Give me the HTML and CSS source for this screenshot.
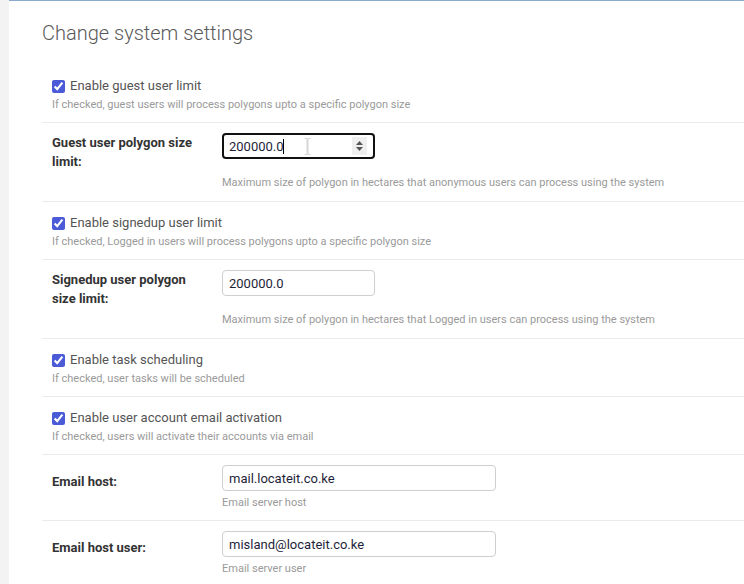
FILE: index.html
```html
<!DOCTYPE html>
<html lang="en">
<head>
<meta charset="utf-8">
<title>Change system settings</title>
<link rel="stylesheet" href="styles.css">
</head>
<body>
<div class="layout">
  <aside class="side-strip"></aside>
  <main class="content">
    <h1 class="page-title">Change system settings</h1>
    <form class="settings">
      <div class="row check-row">
        <label class="check-label"><input type="checkbox" checked> Enable guest user limit</label>
        <div class="help">If checked, guest users will process polygons upto a specific polygon size</div>
      </div>
      <div class="row field-row">
        <div class="field-line">
          <label class="field-label">Guest user polygon size limit:</label>
          <div class="input-wrap focused">
            <input class="text-input short" type="text" value="200000.0">
            <span class="caret"></span>
            <svg class="ibeam" width="7" height="17" viewBox="0 0 7 17"><path d="M0.5 0.5h2.5v16h-2.5M6.5 0.5h-2.5v16h2.5M3.5 1v15" fill="none" stroke="#d6d6d6" stroke-width="1"/></svg>
            <span class="spinner"><svg width="9" height="12" viewBox="0 0 9 12"><path d="M4.5 1L8 5H1z M4.5 11L8 7H1z" fill="#555"/></svg></span>
          </div>
        </div>
        <div class="help field-help">Maximum size of polygon in hectares that anonymous users can process using the system</div>
      </div>
      <div class="row check-row">
        <label class="check-label"><input type="checkbox" checked> Enable signedup user limit</label>
        <div class="help">If checked, Logged in users will process polygons upto a specific polygon size</div>
      </div>
      <div class="row field-row">
        <div class="field-line">
          <label class="field-label">Signedup user polygon size limit:</label>
          <input class="text-input short" type="text" value="200000.0">
        </div>
        <div class="help field-help">Maximum size of polygon in hectares that Logged in users can process using the system</div>
      </div>
      <div class="row check-row">
        <label class="check-label"><input type="checkbox" checked> Enable task scheduling</label>
        <div class="help">If checked, user tasks will be scheduled</div>
      </div>
      <div class="row check-row">
        <label class="check-label"><input type="checkbox" checked> Enable user account email activation</label>
        <div class="help">If checked, users will activate their accounts via email</div>
      </div>
      <div class="row field-row single-row">
        <div class="field-line">
          <label class="field-label single">Email host:</label>
          <input class="text-input long" type="text" value="mail.locateit.co.ke">
        </div>
        <div class="help field-help">Email server host</div>
      </div>
      <div class="row field-row single-row">
        <div class="field-line">
          <label class="field-label single">Email host user:</label>
          <input class="text-input long" type="text" value="misland@locateit.co.ke">
        </div>
        <div class="help field-help">Email server user</div>
      </div>
    </form>
  </main>
</div>
</body>
</html>
```

FILE: styles.css
```css
* { box-sizing: border-box; }
html, body { margin: 0; padding: 0; background: #fff; }
body {
  font-family: Roboto, "Liberation Sans", Arial, sans-serif;
  color: #444;
  overflow: hidden;
  height: 584px;
}
.layout { display: flex; min-height: 584px; }
.side-strip {
  width: 9px;
  flex: 0 0 9px;
  background: #f3f3f3;
}
.content {
  flex: 1;
  border-top: 1px solid #8aaacb;
  padding: 0 0 0 33px;
}
.page-title {
  margin: 20px 0 0 0;
  font-size: 20px;
  line-height: 24px;
  font-weight: 300;
  color: #5a5a5a;
  height: 44px;
}
.settings { display: flex; flex-direction: column; }
.row {
  border-bottom: 1px solid #ebebeb;
  padding: 10px 0 10px 10px;
}
.single-row { padding-bottom: 9px; }
.check-row { padding: 11px 0 9px 10px; }
.check-label {
  display: flex;
  align-items: center;
  font-size: 13px;
  line-height: 20px;
  color: #555;
}
.check-label input {
  width: 13px;
  height: 13px;
  margin: 0 5px 0 0;
  accent-color: #4b5bd8;
}
.help {
  font-size: 11px;
  line-height: 17px;
  color: #9a9a9a;
}
.field-line { display: flex; align-items: flex-start; }
.field-label {
  width: 150px;
  margin-right: 20px;
  font-size: 13px;
  line-height: 19px;
  font-weight: 700;
  color: #333;
}
.field-label.single { padding-top: 7px; }
.text-input {
  height: 26px;
  border: 1px solid #cfcfcf;
  border-radius: 4px;
  padding: 0 6px;
  font-family: Roboto, "Liberation Sans", Arial, sans-serif;
  font-size: 13px;
  color: #1f1f3a;
  background: #fff;
  outline: none;
}
.text-input.short { width: 153px; }
.text-input.long { width: 274px; }
.field-help { margin: 4px 0 0 170px; line-height: 16px; }
.input-wrap { position: relative; width: 153px; height: 26px; }
.input-wrap.focused .text-input {
  border: 2px solid #111;
  border-radius: 4px;
  padding: 0 5px;
}
.caret {
  position: absolute;
  left: 61px;
  top: 6px;
  width: 1px;
  height: 15px;
  background: #000;
}
.ibeam { position: absolute; left: 82px; top: 5px; }
.spinner {
  position: absolute;
  right: 8px;
  top: 4px;
  width: 15px;
  height: 18px;
  background: #efefef;
  display: flex;
  align-items: center;
  justify-content: center;
}
```
